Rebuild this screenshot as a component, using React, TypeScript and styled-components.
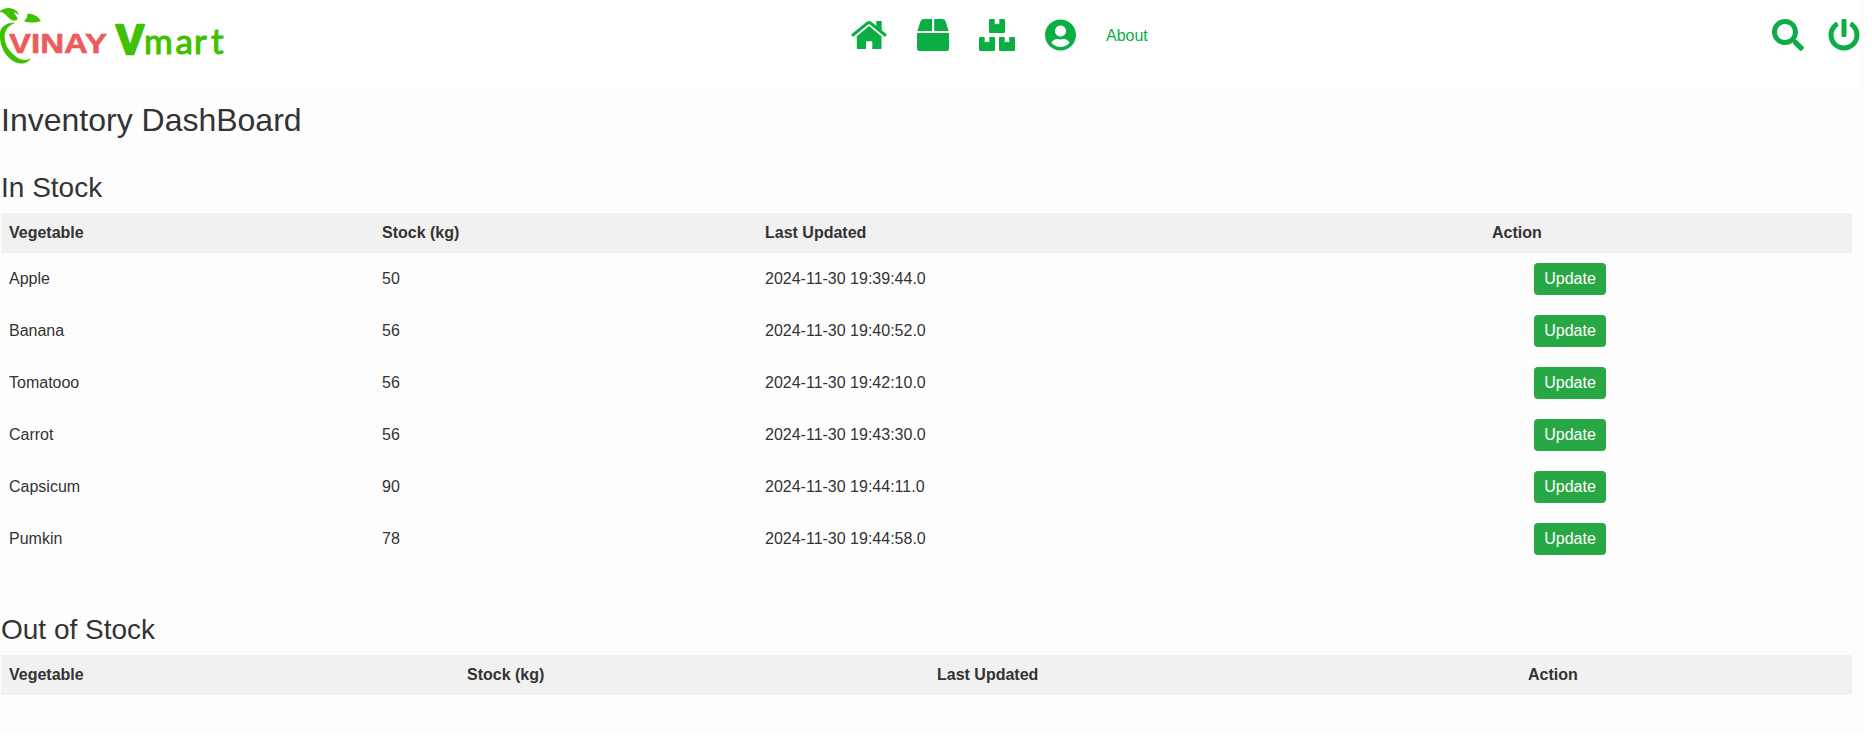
import React from "react";
import styled, { createGlobalStyle } from "styled-components";
import { FaUserCircle, FaSearch, FaPowerOff } from "react-icons/fa";

const GlobalStyle = createGlobalStyle`
  * { box-sizing: border-box; }
  body {
    margin: 0;
    background: #fff;
    color: #333;
    font: 16px/24px "Liberation Sans", Arial, sans-serif;
  }
`;

const Page = styled.div`
  width: 1864px;
  height: 731px;
  background: #fdfdfd;
`;

const Header = styled.header`
  width: 1860px;
  height: 86px;
  background: #fff;
  display: grid;
  grid-template-columns: 851px 1fr auto;
  align-items: start;
`;

const Logo = styled.svg`
  display: block;
  width: 240px;
  height: 70px;
`;

const Nav = styled.nav<{ $gap: number }>`
  display: flex;
  align-items: center;
  gap: ${(p) => p.$gap}px;
  padding-top: 19px;
  color: #0bae43;
`;

const NavItem = styled.a<{ $width?: number }>`
  display: flex;
  color: inherit;
  text-decoration: none;
  svg {
    display: block;
    flex: none;
    height: 32px;
    width: ${(p) => p.$width ?? 32}px;
  }
`;

const NavText = styled(NavItem)`
  padding-top: 1px;
`;

const Main = styled.main`
  padding: 15px 12px 0 1px;
`;

const Title = styled.h1`
  margin: 0;
  font-size: 32px;
  font-weight: 400;
  line-height: 38px;
`;

const Section = styled.section<{ $top: number }>`
  margin-top: ${(p) => p.$top}px;
`;

const SectionTitle = styled.h2`
  margin: 0 0 8px;
  font-size: 28px;
  font-weight: 400;
  line-height: 34px;
`;

const Row = styled.div<{ $columns: string; $head?: boolean }>`
  display: grid;
  grid-template-columns: ${(p) => p.$columns};
  align-items: center;
  height: ${(p) => (p.$head ? 40 : 52)}px;
  background: ${(p) => (p.$head ? "#f1f1f1" : "transparent")};
  font-weight: ${(p) => (p.$head ? 700 : 400)};
`;

const Cell = styled.div`
  padding: 0 8px;
`;

const UpdateButton = styled.button`
  display: block;
  width: 72px;
  height: 32px;
  margin-left: 42px;
  padding: 0;
  border: 0;
  border-radius: 4px;
  background: #28a745;
  color: #fff;
  font: inherit;
`;

const HEADINGS = ["Vegetable", "Stock (kg)", "Last Updated", "Action"];
const STOCK = [
  ["Apple", "50", "2024-11-30 19:39:44.0"],
  ["Banana", "56", "2024-11-30 19:40:52.0"],
  ["Tomatooo", "56", "2024-11-30 19:42:10.0"],
  ["Carrot", "56", "2024-11-30 19:43:30.0"],
  ["Capsicum", "90", "2024-11-30 19:44:11.0"],
  ["Pumkin", "78", "2024-11-30 19:44:58.0"],
];
const IN_COLUMNS = "373px 383px 727px 1fr";
const OUT_COLUMNS = "458px 470px 591px 1fr";

function BrandLogo() {
  return (
    <Logo viewBox="0 0 240 70" role="img" aria-label="Vinay Vmart">
      <g fill="#3fc000">
        <path d="M0 11C4 8 9 7 13 9C16 10 18 12 19 15L14 12C14 15 19 17 17 20C12 22 9 18 6 15C4 13 2 12 0 12Z" />
        <path d="M24 21C26 19 28 17 27 14C32 13 38 16 41 21C35 23 29 23 24 21Z" />
        <path d="M15 23C8 22 0 26 0 34C-1 48 8 61 18 63C24 65 30 61 31 58C24 63 16 58 10 51C3 43 1 28 15 23Z" />
      </g>
      <text x="9" y="53" textLength="98" lengthAdjust="spacingAndGlyphs" fill="#eb5c5c" stroke="#eb5c5c" strokeWidth="0.6" fontFamily="Liberation Sans" fontWeight="700" fontSize="28.5">VINAY</text>
      <g fill="#3fc000" stroke="#3fc000" strokeLinejoin="round">
        <text x="116" y="54" strokeWidth="2.6" fontFamily="Liberation Sans" fontWeight="700" fontSize="42">V</text>
        <text x="144 175.5 194 211" y="54" strokeWidth="1.1" fontFamily="Lato" fontWeight="400" fontSize="35">mart</text>
      </g>
    </Logo>
  );
}

function HomeIcon() {
  return (
    <svg viewBox="0 0 36 32" fill="currentColor">
      <path d="M18 7 30.5 17.3V29.2Q30.5 30 29.7 30H21.3V22.3H15V30H6.6Q5.8 30 5.8 29.2V17.3Z" />
      <path d="M2 16 16.4 4.2Q18 3 19.6 4.2L34 16" fill="none" stroke="currentColor" strokeWidth="3" strokeLinecap="round" strokeLinejoin="round" />
      <path d="M25.3 2H30.7V13L25.3 8.6Z" />
    </svg>
  );
}

function BoxIcon() {
  return (
    <svg viewBox="0 0 32 32" fill="currentColor">
      <path d="M6.5 0H15V12H0.3L3.5 2.2Q4.3 0 6.5 0ZM17.2 0H25.5Q27.7 0 28.5 2.2L31.7 12H17.2Z" />
      <path d="M0 14H32V29.5Q32 32 29.5 32H2.5Q0 32 0 29.5Z" />
    </svg>
  );
}

function BoxesIcon() {
  return (
    <svg viewBox="0 0 36 32" fill="currentColor">
      <path d="M11 0H15.7V5.5L18 4.5L20.3 5.5V0H25Q26 0 26 1V13Q26 14 25 14H11Q10 14 10 13V1Q10 0 11 0Z" />
      <path d="M1 18H5.7V23.5L8 22.5L10.3 23.5V18H15Q16 18 16 19V31Q16 32 15 32H1Q0 32 0 31V19Q0 18 1 18Z" />
      <path d="M21 18H25.7V23.5L28 22.5L30.3 23.5V18H35Q36 18 36 19V31Q36 32 35 32H21Q20 32 20 31V19Q20 18 21 18Z" />
    </svg>
  );
}

export default function App() {
  return (
    <>
      <GlobalStyle />
      <Page>
        <Header>
          <BrandLogo />
          <Nav $gap={30}>
            <NavItem $width={36}><HomeIcon /></NavItem>
            <NavItem><BoxIcon /></NavItem>
            <NavItem $width={36}><BoxesIcon /></NavItem>
            <NavItem $width={31}><FaUserCircle /></NavItem>
            <NavText>About</NavText>
          </Nav>
          <Nav $gap={24}>
            <NavItem><FaSearch /></NavItem>
            <NavItem><FaPowerOff /></NavItem>
          </Nav>
        </Header>
        <Main>
          <Title>Inventory DashBoard</Title>
          <Section $top={32}>
            <SectionTitle>In Stock</SectionTitle>
            <Row $head $columns={IN_COLUMNS}>
              {HEADINGS.map((h) => <Cell key={h}>{h}</Cell>)}
            </Row>
            {STOCK.map((item) => (
              <Row key={item[0]} $columns={IN_COLUMNS}>
                {item.map((value) => <Cell key={value}>{value}</Cell>)}
                <Cell><UpdateButton>Update</UpdateButton></Cell>
              </Row>
            ))}
          </Section>
          <Section $top={48}>
            <SectionTitle>Out of Stock</SectionTitle>
            <Row $head $columns={OUT_COLUMNS}>
              {HEADINGS.map((h) => <Cell key={h}>{h}</Cell>)}
            </Row>
          </Section>
        </Main>
      </Page>
    </>
  );
}
